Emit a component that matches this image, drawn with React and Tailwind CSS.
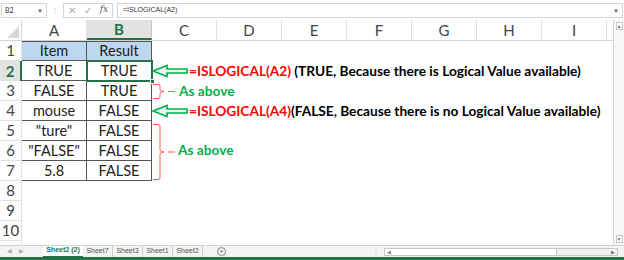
import React from 'react';

const cols = ['A', 'B', 'C', 'D', 'E', 'F', 'G', 'H', 'I'];
const data = [
  ['Item', 'Result'],
  ['TRUE', 'TRUE'],
  ['FALSE', 'TRUE'],
  ['mouse', 'FALSE'],
  ['"ture"', 'FALSE'],
  ['"FALSE"', 'FALSE'],
  ['5.8', 'FALSE'],
];

const Arrow = ({ top }) => (
  <svg className="absolute left-[151px]" style={{ top }} width="38" height="14" viewBox="0 0 38 14">
    <polygon points="2,7 16,1.5 16,5 36,5 36,9 16,9 16,12.5" fill="#e8f8ee" stroke="#00b050" strokeWidth="1.6" strokeLinejoin="miter" />
  </svg>
);

const Bracket = ({ top, h }) => {
  const m = h / 2;
  return (
    <svg className="absolute left-[150px]" style={{ top }} width="28" height={h + 2} viewBox={`0 0 28 ${h + 2}`}>
      <path d={`M3,1.5 H8 Q10,1.5 10,3.5 V${m - 1} Q10,${m + 1} 14,${m + 1} Q10,${m + 1} 10,${m + 3} V${h - 1.5} Q10,${h + 0.5} 8,${h + 0.5} H3 M18,${m + 1} H25`} fill="none" stroke="#ff5a5a" strokeWidth="1" />
    </svg>
  );
};

export default function App() {
  return (
    <div className="w-[624px] h-[260px] bg-white overflow-hidden flex flex-col font-['Lato','Liberation_Sans',sans-serif] text-[#222]">
      {/* formula bar */}
      <div className="h-[20px] flex items-center gap-[4px] px-[1px] text-[7px] text-[#333] bg-white">
        <div className="w-[46px] h-[15px] border border-[#d4d4d4] flex items-center justify-between px-[3px]">
          <span>B2</span>
          <span className="text-[6px] text-[#666]">▼</span>
        </div>
        <span className="text-[#bbb] text-[8px] w-[8px] text-center">⋮</span>
        <div className="w-[50px] h-[15px] border border-[#d4d4d4] flex items-center justify-around text-[#aaa] text-[10px]">
          <span>✕</span>
          <span>✓</span>
          <span className="font-['DejaVu_Serif',serif] italic text-[#555] text-[9px]">fx</span>
        </div>
        <div className="flex-1 h-[15px] border border-[#d4d4d4] flex items-center justify-between pl-[5px] pr-[3px]">
          <span className="font-['Liberation_Sans',sans-serif] text-[7px]">=ISLOGICAL(A2)</span>
          <span className="text-[6px] text-[#666]">▼</span>
        </div>
      </div>

      <div className="h-[225px] flex overflow-hidden">
        {/* sheet */}
        <div className="relative w-[613px] overflow-hidden">
          {/* column header */}
          <div className="h-[21px] flex border-b border-[#d4d4d4] text-[15px] text-[#444]">
            <div className="w-[22px] border-r border-[#d4d4d4] relative">
              <svg className="absolute right-[2px] bottom-[2px]" width="12" height="12"><polygon points="12,0 12,12 0,12" fill="#d8d8d8" /></svg>
            </div>
            {cols.map((c) => (
              <div
                key={c}
                className={
                  c === 'B'
                    ? 'w-[65px] shrink-0 flex items-center justify-center bg-[#e2e2e2] border-r border-[#c8c8c8] border-b-2 border-b-[#217346] text-[#217346] font-bold'
                    : 'w-[65px] shrink-0 flex items-center justify-center border-r border-[#e1e1e1]'
                }
              >
                {c}
              </div>
            ))}
          </div>

          {/* rows */}
          {Array.from({ length: 11 }, (_, i) => {
            const r = i + 1;
            const row = data[i];
            return (
              <div key={r} className="h-[20px] flex">
                <div
                  className={
                    r === 2
                      ? 'w-[22px] shrink-0 flex items-center justify-center border-r-2 border-[#217346] bg-[#e2e2e2] text-[#217346] font-bold text-[15px]'
                      : 'w-[22px] shrink-0 flex items-center justify-center border-r border-b border-[#e1e1e1] text-[#444] text-[15px]'
                  }
                >
                  {r <= 10 ? r : ''}
                </div>
                {row ? (
                  <>
                    <div className={`w-[65px] shrink-0 flex items-center justify-center border-r border-b border-[#555] text-[14.5px] ${r === 1 ? 'bg-[#bdd7ee] border-t' : ''}`}>{row[0]}</div>
                    <div className={`w-[65px] shrink-0 flex items-center justify-center border-r border-b border-[#555] text-[14.5px] ${r === 1 ? 'bg-[#bdd7ee] border-t' : ''}`}>{row[1]}</div>
                  </>
                ) : null}
              </div>
            );
          })}

          {/* selection B2 */}
          <div className="absolute left-[86px] top-[40px] w-[67px] h-[22px] border-2 border-[#217346]">
            <div className="absolute -right-[4px] -bottom-[4px] w-[5px] h-[5px] bg-[#217346] border border-white" />
          </div>

          {/* annotations */}
          <Arrow top={44} />
          <div className="absolute left-[189px] top-[41px] h-[20px] flex items-center text-[13.7px] font-bold whitespace-nowrap">
            <span className="text-[#ff0000]">=ISLOGICAL(A2)</span>
            <span className="text-black">&nbsp;(TRUE, Because there is Logical Value available)</span>
          </div>

          <Bracket top={63} h={15} />
          <div className="absolute left-[179px] top-[61px] h-[20px] flex items-center text-[13.7px] font-bold text-[#00b050]">As above</div>

          <Arrow top={84} />
          <div className="absolute left-[189px] top-[81px] h-[20px] flex items-center text-[13.7px] font-bold whitespace-nowrap">
            <span className="text-[#ff0000]">=ISLOGICAL(A4)</span>
            <span className="text-black">(FALSE, Because there is no Logical Value available)</span>
          </div>

          <Bracket top={103} h={56} />
          <div className="absolute left-[178px] top-[120px] h-[20px] flex items-center text-[13.7px] font-bold text-[#00b050]">As above</div>
        </div>

        {/* vertical scrollbar */}
        <div className="w-[11px] border-l border-[#d4d4d4] bg-[#f7f7f7] flex flex-col justify-between items-center py-[2px]">
          <div className="w-[7px] h-[8px] border border-[#c8c8c8] bg-white text-[5px] leading-[6px] text-center text-[#777]">▲</div>
          <div className="w-[7px] h-[8px] border border-[#c8c8c8] bg-white text-[5px] leading-[6px] text-center text-[#777]">▼</div>
        </div>
      </div>

      {/* sheet tabs */}
      <div className="h-[12px] flex items-center bg-[#f3f3f3] border-t border-[#d4d4d4] text-[7px] text-[#555] font-['Liberation_Sans',sans-serif]">
        <span className="w-[10px] ml-[7px] text-[#aaa] text-[6px]">◀</span>
        <span className="w-[10px] ml-[2px] text-[#aaa] text-[6px]">▶</span>
        <div className="ml-[14px] w-[40px] h-[12px] bg-white flex items-center justify-center text-[#217346] font-bold border-b-2 border-[#217346]">Sheet2 (2)</div>
        <div className="w-[30px] text-center border-r border-[#ccc]">Sheet7</div>
        <div className="w-[30px] text-center border-r border-[#ccc]">Sheet3</div>
        <div className="w-[30px] text-center border-r border-[#ccc]">Sheet1</div>
        <div className="w-[30px] text-center border-r border-[#ccc]">Sheet2</div>
        <div className="ml-[14px] w-[9px] h-[9px] rounded-full border border-[#888] flex items-center justify-center text-[7px] leading-none text-[#666]">+</div>
        <span className="ml-[146px] text-[#bbb] text-[8px]">⋮</span>
        <div className="ml-[4px] w-[234px] h-[8px] border border-[#c8c8c8] bg-[#f0f0f0] flex items-center">
          <div className="w-[172px] h-[6px] bg-white border-r border-[#c8c8c8] text-[5px] leading-[6px] pl-[2px] text-[#777]">◀</div>
          <div className="flex-1" />
          <div className="text-[5px] leading-[6px] pr-[2px] text-[#777]">▶</div>
        </div>
      </div>
      <div className="h-[3px] bg-[#217346]" />
    </div>
  );
}
